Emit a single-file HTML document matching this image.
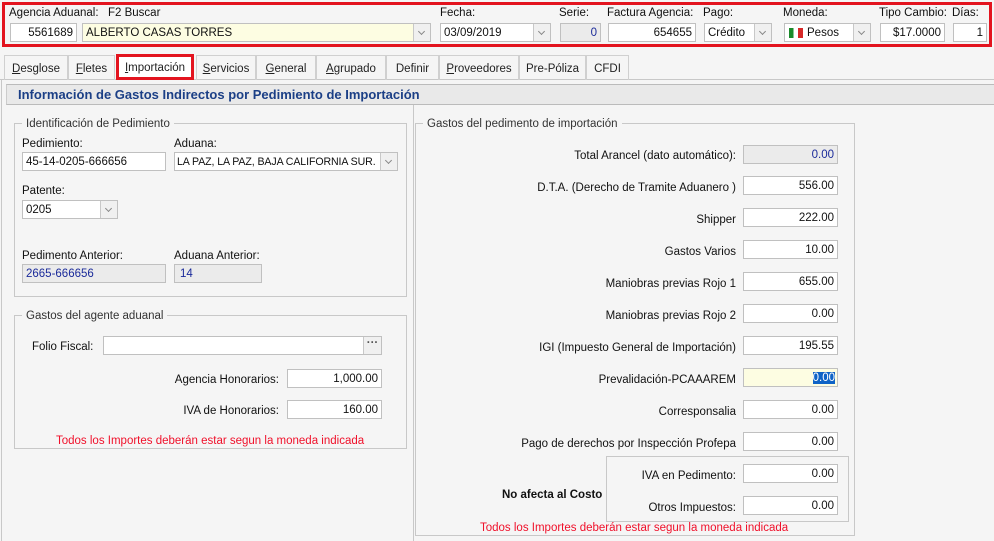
<!DOCTYPE html>
<html><head><meta charset="utf-8"><style>
*{box-sizing:border-box;margin:0;padding:0}
body{width:994px;height:541px;background:#f5f5f5;font-family:"Liberation Sans",sans-serif;font-size:11.5px;color:#111;position:relative;overflow:hidden}
.a{position:absolute;white-space:nowrap}
.i{position:absolute;background:#fff;border:1px solid #c0c0c0;height:19px;line-height:18px;padding:0 3px;font-size:11.5px;white-space:nowrap;overflow:hidden}
.r{text-align:right}
.g{background:#ebebeb;color:#1a2a9a}
.dd{position:absolute;top:0;right:0;width:17px;height:17px;background:#f0f0f0;border-left:1px solid #c8c8c8}
.dd:after{content:"";position:absolute;left:5px;top:5px;width:4px;height:4px;border-right:1.5px solid #888;border-bottom:1.5px solid #888;transform:rotate(45deg)}
.bt{position:absolute;top:0;right:0;width:18px;height:17px;background:#f0f0f0;border-left:1px solid #c8c8c8;text-align:center;line-height:13px;color:#555;font-weight:bold}
.gb{position:absolute;border:1px solid #c8c8c8}
.lg{position:absolute;background:#f5f5f5;padding:0 4px;top:-8px;left:7px;color:#333;white-space:nowrap}
.tab{position:absolute;top:55px;height:25px;border:1px solid #d0d0d0;border-bottom:none;line-height:27px;text-align:center;color:#222}
.red{color:#f0102a}
.L{position:absolute;white-space:nowrap;margin-top:2px}
</style></head><body>
<!-- header -->
<div class="a" style="left:2px;top:2px;width:990px;height:45px;border:3px solid #e3141f"></div>
<div class="a" style="left:9px;top:7px">Agencia Aduanal:</div>
<div class="a" style="left:108px;top:7px">F2 Buscar</div>
<div class="a" style="left:440px;top:7px">Fecha:</div>
<div class="a" style="left:559px;top:7px">Serie:</div>
<div class="a" style="left:607px;top:7px">Factura Agencia:</div>
<div class="a" style="left:703px;top:7px">Pago:</div>
<div class="a" style="left:783px;top:7px">Moneda:</div>
<div class="a" style="left:879px;top:7px">Tipo Cambio:</div>
<div class="a" style="left:952px;top:7px">Días:</div>
<div class="i r" style="left:10px;top:23px;width:67px">5561689</div>
<div class="i" style="left:82px;top:23px;width:349px;background:#fdfde2">ALBERTO CASAS TORRES<span class="dd"></span></div>
<div class="i" style="left:440px;top:23px;width:111px">03/09/2019<span class="dd"></span></div>
<div class="i r g" style="left:560px;top:23px;width:41px">0</div>
<div class="i r" style="left:608px;top:23px;width:88px">654655</div>
<div class="i" style="left:704px;top:23px;width:68px">Crédito<span class="dd"></span></div>
<div class="i" style="left:784px;top:23px;width:87px;padding-left:22px">Pesos<span class="dd"></span><span style="position:absolute;left:4px;top:4px;width:14px;height:10px;background:linear-gradient(90deg,#1a8a2a 33%,#fff 33%,#fff 66%,#d62828 66%)"></span></div>
<div class="i r" style="left:880px;top:23px;width:65px">$17.0000</div>
<div class="i r" style="left:953px;top:23px;width:34px">1</div>
<!-- tabs -->
<div class="a" style="left:0;top:79px;width:994px;border-top:1px solid #c8c8c8"></div>
<div class="tab" style="left:4px;width:64px"><u>D</u>esglose</div>
<div class="tab" style="left:68px;width:47px"><u>F</u>letes</div>
<div class="tab" style="left:116px;width:78px;top:54px;height:26px;border:3px solid #e3141f;background:#fff;line-height:22px"><u>I</u>mportación</div>
<div class="tab" style="left:196px;width:60px"><u>S</u>ervicios</div>
<div class="tab" style="left:256px;width:60px"><u>G</u>eneral</div>
<div class="tab" style="left:316px;width:70px"><u>A</u>grupado</div>
<div class="tab" style="left:386px;width:53px">Definir</div>
<div class="tab" style="left:439px;width:80px"><u>P</u>roveedores</div>
<div class="tab" style="left:519px;width:67px">Pre-Póliza</div>
<div class="tab" style="left:586px;width:43px">CFDI</div>
<!-- panel -->
<div class="a" style="left:1px;top:80px;width:1px;height:461px;background:#c8c8c8"></div>
<div class="a" style="left:413px;top:104px;width:1px;height:437px;background:#c8c8c8"></div>
<div class="a" style="left:6px;top:84px;width:990px;height:21px;background:#e9e9e9;border-top:1px solid #bbb;border-bottom:1px solid #bbb;border-left:1px solid #ccc;padding-left:11px;line-height:20px;font-weight:bold;font-size:13px;color:#1b3f86">Información de Gastos Indirectos por Pedimiento de Importación</div>
<!-- left group 1 -->
<div class="gb" style="left:14px;top:123px;width:393px;height:174px"><span class="lg" style="margin-top:2px">Identificación de Pedimiento</span></div>
<div class="L" style="left:22px;top:136px">Pedimiento:</div>
<div class="L" style="left:174px;top:136px">Aduana:</div>
<div class="i" style="left:22px;top:152px;width:144px">45-14-0205-666656</div>
<div class="i" style="left:174px;top:152px;width:224px;padding-left:2px;font-size:10.6px;letter-spacing:-0.1px">LA PAZ, LA PAZ, BAJA CALIFORNIA SUR.<span class="dd"></span></div>
<div class="L" style="left:22px;top:183px">Patente:</div>
<div class="i" style="left:22px;top:200px;width:96px">0205<span class="dd"></span></div>
<div class="L" style="left:22px;top:248px">Pedimento Anterior:</div>
<div class="L" style="left:174px;top:248px">Aduana Anterior:</div>
<div class="i g" style="left:22px;top:264px;width:144px;color:#1a2a9a">2665-666656</div>
<div class="i g" style="left:174px;top:264px;width:88px;padding-left:5px">14</div>
<!-- left group 2 -->
<div class="gb" style="left:14px;top:315px;width:393px;height:134px"><span class="lg" style="margin-top:2px">Gastos del agente aduanal</span></div>
<div class="L" style="left:32px;top:339px">Folio Fiscal:</div>
<div class="i" style="left:103px;top:336px;width:279px"><span class="bt">···</span></div>
<div class="L" style="right:715px;top:372px">Agencia Honorarios:</div>
<div class="i r" style="left:287px;top:369px;width:95px">1,000.00</div>
<div class="L" style="right:715px;top:403px">IVA de Honorarios:</div>
<div class="i r" style="left:287px;top:400px;width:95px">160.00</div>
<div class="L red" style="left:56px;top:433px">Todos los Importes deberán estar segun la moneda indicada</div>
<!-- right group -->
<div class="gb" style="left:415px;top:123px;width:440px;height:413px"><span class="lg" style="margin-top:2px">Gastos del pedimento de importación</span></div>
<div class="L" style="right:258px;top:148px">Total Arancel (dato automático):</div>
<div class="i r g" style="left:743px;top:145px;width:95px">0.00</div>
<div class="L" style="right:258px;top:180px">D.T.A. (Derecho de Tramite Aduanero )</div>
<div class="i r" style="left:743px;top:176px;width:95px">556.00</div>
<div class="L" style="right:258px;top:212px">Shipper</div>
<div class="i r" style="left:743px;top:208px;width:95px">222.00</div>
<div class="L" style="right:258px;top:244px">Gastos Varios</div>
<div class="i r" style="left:743px;top:240px;width:95px">10.00</div>
<div class="L" style="right:258px;top:276px">Maniobras previas Rojo 1</div>
<div class="i r" style="left:743px;top:272px;width:95px">655.00</div>
<div class="L" style="right:258px;top:308px">Maniobras previas Rojo 2</div>
<div class="i r" style="left:743px;top:304px;width:95px">0.00</div>
<div class="L" style="right:258px;top:340px">IGI (Impuesto General de Importación)</div>
<div class="i r" style="left:743px;top:336px;width:95px">195.55</div>
<div class="L" style="right:258px;top:372px">Prevalidación-PCAAAREM</div>
<div class="i r" style="left:743px;top:368px;width:95px;background:#fdfde2;padding-right:2px"><span style="background:#0f63c6;color:#fff">0.00</span></div>
<div class="L" style="right:258px;top:404px">Corresponsalia</div>
<div class="i r" style="left:743px;top:400px;width:95px">0.00</div>
<div class="L" style="right:258px;top:436px">Pago de derechos por Inspección Profepa</div>
<div class="i r" style="left:743px;top:432px;width:95px">0.00</div>
<div class="gb" style="left:606px;top:456px;width:243px;height:66px"></div>
<div class="L" style="left:502px;top:487px;font-weight:bold">No afecta al Costo</div>
<div class="L" style="right:258px;top:468px">IVA en Pedimento:</div>
<div class="i r" style="left:743px;top:464px;width:95px">0.00</div>
<div class="L" style="right:258px;top:500px">Otros Impuestos:</div>
<div class="i r" style="left:743px;top:496px;width:95px">0.00</div>
<div class="L red" style="left:480px;top:520px">Todos los Importes deberán estar segun la moneda indicada</div>
</body></html>
